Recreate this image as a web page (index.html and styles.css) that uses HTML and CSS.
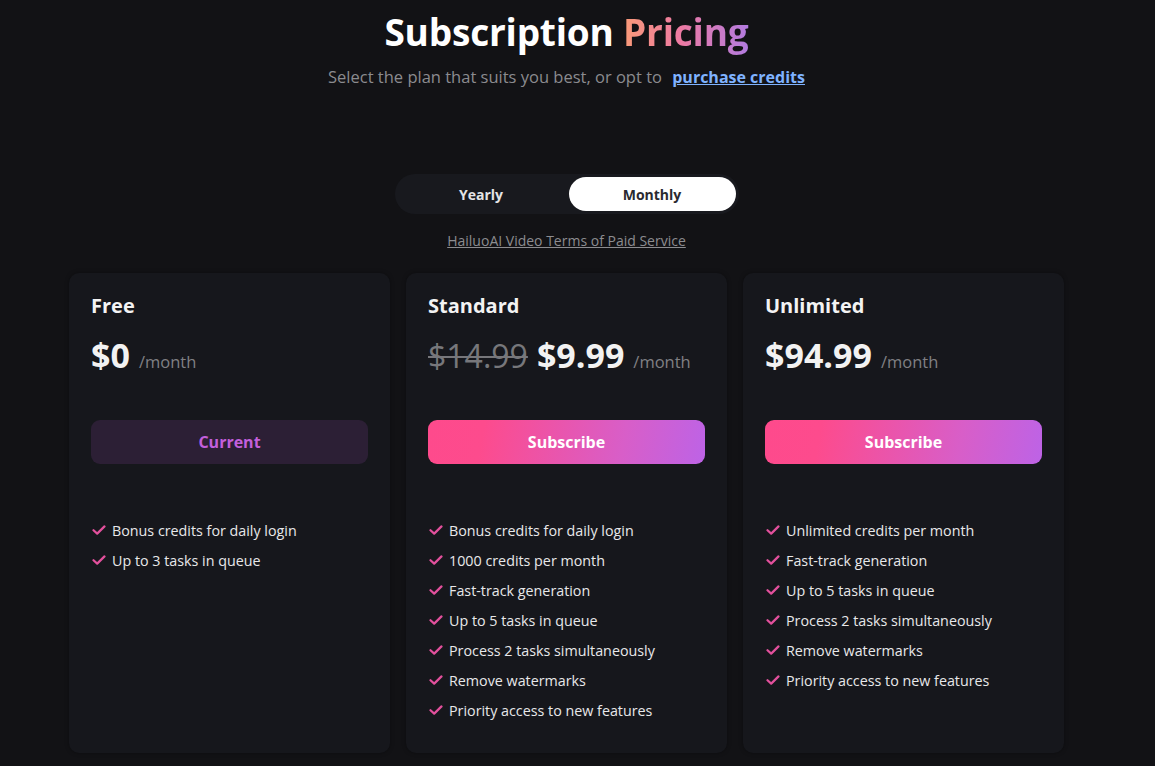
FILE: index.html
```html
<!DOCTYPE html>
<html lang="en">
<head>
<meta charset="utf-8">
<title>Subscription Pricing</title>
<link rel="stylesheet" href="styles.css">
</head>
<body>
<main class="page">
  <header class="hero">
    <h1 class="title">Subscription <span class="grad">Pricing</span></h1>
    <p class="subtitle">Select the plan that suits you best, or opt to <a class="credits-link" href="#">purchase credits</a></p>
  </header>

  <div class="toggle">
    <button class="toggle-btn">Yearly</button>
    <button class="toggle-btn active">Monthly</button>
  </div>
  <a class="terms" href="#">HailuoAI Video Terms of Paid Service</a>

  <section class="cards">
    <article class="card">
      <h2 class="plan">Free</h2>
      <div class="price"><span class="amount">$0</span><span class="per">/month</span></div>
      <button class="btn btn-current">Current</button>
      <ul class="features">
        <li><svg class="check" viewBox="0 0 14 14"><path d="M1.5 7.2 L5.2 10.6 L12.5 3.4"/></svg>Bonus credits for daily login</li>
        <li><svg class="check" viewBox="0 0 14 14"><path d="M1.5 7.2 L5.2 10.6 L12.5 3.4"/></svg>Up to 3 tasks in queue</li>
      </ul>
    </article>

    <article class="card">
      <h2 class="plan">Standard</h2>
      <div class="price"><span class="old">$14.99</span><span class="amount">$9.99</span><span class="per">/month</span></div>
      <button class="btn btn-sub">Subscribe</button>
      <ul class="features">
        <li><svg class="check" viewBox="0 0 14 14"><path d="M1.5 7.2 L5.2 10.6 L12.5 3.4"/></svg>Bonus credits for daily login</li>
        <li><svg class="check" viewBox="0 0 14 14"><path d="M1.5 7.2 L5.2 10.6 L12.5 3.4"/></svg>1000 credits per month</li>
        <li><svg class="check" viewBox="0 0 14 14"><path d="M1.5 7.2 L5.2 10.6 L12.5 3.4"/></svg>Fast-track generation</li>
        <li><svg class="check" viewBox="0 0 14 14"><path d="M1.5 7.2 L5.2 10.6 L12.5 3.4"/></svg>Up to 5 tasks in queue</li>
        <li><svg class="check" viewBox="0 0 14 14"><path d="M1.5 7.2 L5.2 10.6 L12.5 3.4"/></svg>Process 2 tasks simultaneously</li>
        <li><svg class="check" viewBox="0 0 14 14"><path d="M1.5 7.2 L5.2 10.6 L12.5 3.4"/></svg>Remove watermarks</li>
        <li><svg class="check" viewBox="0 0 14 14"><path d="M1.5 7.2 L5.2 10.6 L12.5 3.4"/></svg>Priority access to new features</li>
      </ul>
    </article>

    <article class="card">
      <h2 class="plan">Unlimited</h2>
      <div class="price"><span class="amount">$94.99</span><span class="per">/month</span></div>
      <button class="btn btn-sub">Subscribe</button>
      <ul class="features">
        <li><svg class="check" viewBox="0 0 14 14"><path d="M1.5 7.2 L5.2 10.6 L12.5 3.4"/></svg>Unlimited credits per month</li>
        <li><svg class="check" viewBox="0 0 14 14"><path d="M1.5 7.2 L5.2 10.6 L12.5 3.4"/></svg>Fast-track generation</li>
        <li><svg class="check" viewBox="0 0 14 14"><path d="M1.5 7.2 L5.2 10.6 L12.5 3.4"/></svg>Up to 5 tasks in queue</li>
        <li><svg class="check" viewBox="0 0 14 14"><path d="M1.5 7.2 L5.2 10.6 L12.5 3.4"/></svg>Process 2 tasks simultaneously</li>
        <li><svg class="check" viewBox="0 0 14 14"><path d="M1.5 7.2 L5.2 10.6 L12.5 3.4"/></svg>Remove watermarks</li>
        <li><svg class="check" viewBox="0 0 14 14"><path d="M1.5 7.2 L5.2 10.6 L12.5 3.4"/></svg>Priority access to new features</li>
      </ul>
    </article>
  </section>
</main>
</body>
</html>
```

FILE: styles.css
```css
* { box-sizing: border-box; }
html, body {
  margin: 0;
  padding: 0;
  background: #121215;
  height: 100%;
  overflow: hidden;
}
body {
  font-family: "Open Sans", "Noto Sans", "Liberation Sans", sans-serif;
  color: #ececec;
}
.page {
  width: 1133px;
  display: flex;
  flex-direction: column;
  align-items: center;
}
.hero {
  display: flex;
  flex-direction: column;
  align-items: center;
  padding-top: 8px;
}
.title {
  margin: 0;
  font-size: 37px;
  line-height: 48px;
  font-weight: 700;
  color: #ffffff;
  letter-spacing: -0.2px;
}
.grad {
  background: linear-gradient(90deg, #f99a78 0%, #ee7aa2 45%, #b27be0 100%);
  -webkit-background-clip: text;
  background-clip: text;
  color: transparent;
}
.subtitle {
  margin: 10px 0 0;
  font-size: 16.5px;
  line-height: 22px;
  color: #8b8b8f;
}
.credits-link {
  margin-left: 6px;
  color: #7fb2ff;
  font-weight: 700;
  font-size: 16px;
  text-decoration: underline;
}
.toggle {
  margin-top: 86px;
  width: 344px;
  height: 40px;
  padding: 3px;
  border-radius: 20px;
  background: #18191e;
  display: flex;
  gap: 4px;
}
.toggle-btn {
  flex: 1;
  border: 0;
  border-radius: 17px;
  background: transparent;
  font-family: inherit;
  font-size: 14px;
  font-weight: 700;
  color: #e4e4e6;
  cursor: pointer;
}
.toggle-btn.active {
  background: #ffffff;
  color: #2a2a30;
}
.terms {
  margin-top: 17px;
  font-size: 14px;
  line-height: 20px;
  color: #8c8c90;
  text-decoration: underline;
}
.cards {
  margin-top: 22px;
  display: flex;
  gap: 16px;
}
.card {
  width: 321px;
  height: 480px;
  background: #16171c;
  border-radius: 10px;
  box-shadow: 0 0 4px rgba(0,0,0,0.35);
  padding: 18px 22px 0;
}
.plan {
  margin: 0;
  font-size: 20px;
  line-height: 30px;
  font-weight: 700;
  color: #f3f3f3;
}
.price {
  margin-top: 11px;
  display: flex;
  align-items: baseline;
  gap: 9px;
  height: 44px;
}
.amount {
  font-size: 34px;
  font-weight: 700;
  color: #f2f2f2;
}
.old {
  font-size: 32px;
  font-weight: 400;
  color: #77777b;
  text-decoration: line-through;
  text-decoration-thickness: 2px;
}
.per {
  font-size: 16.5px;
  color: #808084;
}
.btn {
  margin-top: 44px;
  width: 100%;
  height: 44px;
  border: 0;
  border-radius: 9px;
  font-family: inherit;
  font-size: 16px;
  font-weight: 700;
  cursor: pointer;
}
.btn-current {
  background: #2c1f35;
  color: #c35fdc;
}
.btn-sub {
  background: linear-gradient(100deg, #fe4a8c 0%, #fd4b8d 20%, #d85ec8 70%, #bd63e6 100%);
  color: #ffffff;
}
.features {
  list-style: none;
  margin: 51px 0 0;
  padding: 0;
  display: flex;
  flex-direction: column;
}
.features li {
  display: flex;
  align-items: center;
  gap: 6px;
  height: 30px;
  font-size: 14.3px;
  color: #e8e8ea;
}
.check {
  width: 14px;
  height: 14px;
  flex: none;
  margin-left: 1px;
}
.check path {
  fill: none;
  stroke: #e2509c;
  stroke-width: 2.2;
  stroke-linecap: round;
  stroke-linejoin: round;
}
```
